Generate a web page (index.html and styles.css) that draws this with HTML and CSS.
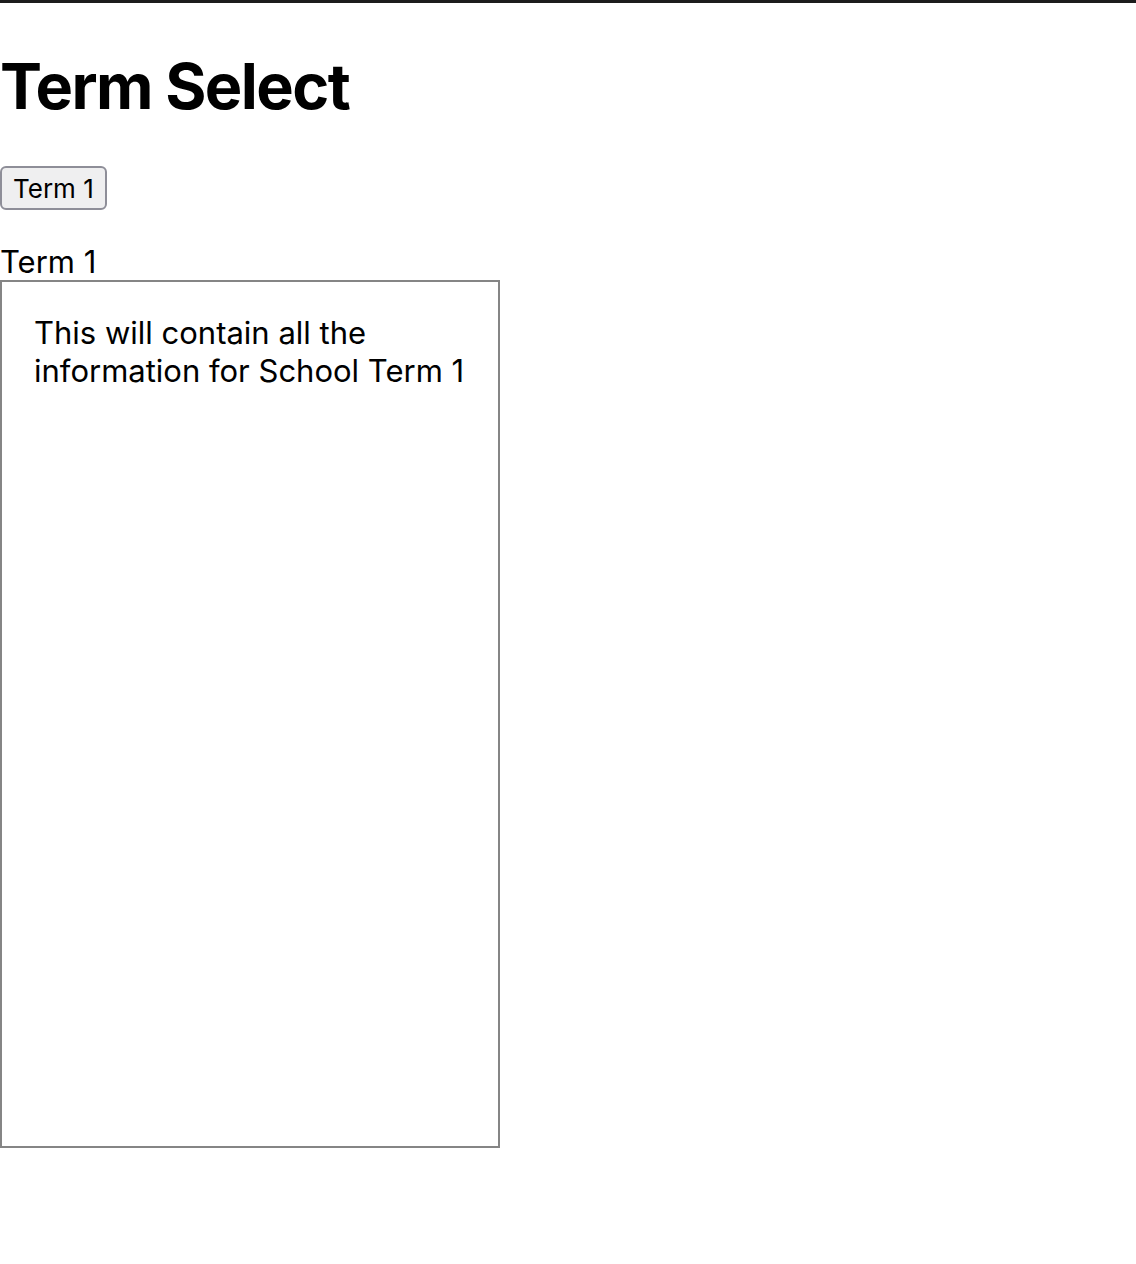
FILE: index.html
```html
<!DOCTYPE html>
<html>
<head>
<meta charset="utf-8">
<link rel="stylesheet" href="styles.css">
</head>
<body>
<div class="page">
  <h1 class="title">Term Select</h1>
  <button class="term-btn">Term 1</button>
  <div class="term-label">Term 1</div>
  <div class="term-box">
    <p class="term-text">This will contain all the information for School Term 1</p>
  </div>
</div>
</body>
</html>
```
FILE: styles.css
```css
html, body { margin: 0; padding: 0; background: #fff; }
body {
  font-family: Inter, "Noto Sans", sans-serif;
  color: #000;
  border-top: 3px solid #1c1c1c;
}
.page { display: flex; flex-direction: column; align-items: flex-start; }
.title {
  font-size: 63px;
  font-weight: 700;
  line-height: 80px;
  margin: 43px 0 0 0;
  letter-spacing: -1.6px;
}
.term-btn {
  margin-top: 40px;
  font-family: Inter, "Noto Sans", sans-serif;
  font-size: 26px;
  line-height: 32px;
  padding: 5px 11px 3px 11px;
  background: #efeff0;
  border: 2px solid #8e8e98;
  border-radius: 6px;
  color: #000;
}
.term-label {
  margin-top: 34px;
  font-size: 31px;
  line-height: 36px;
}
.term-box {
  box-sizing: border-box;
  width: 500px;
  height: 868px;
  border: 2px solid #858585;
  padding: 32px 32px 28px 32px;
}
.term-text {
  margin: 0;
  font-size: 31px;
  line-height: 38px;
}
```
